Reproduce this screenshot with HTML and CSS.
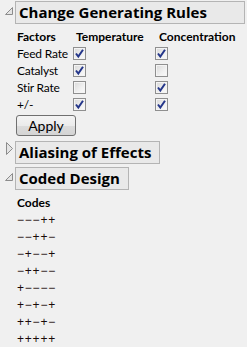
FILE: index.html
```html
<!DOCTYPE html>
<html>
<head>
<meta charset="utf-8">
<link rel="stylesheet" href="styles.css">
</head>
<body>
<div class="page">
  <section class="outline">
    <div class="head">
      <svg class="tri tri-open" width="9" height="9" viewBox="0 0 9 9"><polygon points="7.5,0.5 7.5,7.5 0.5,7.5" fill="#e4e4e4" stroke="#8c8c8c" stroke-width="1"/></svg>
      <div class="title title-wide">Change Generating Rules</div>
    </div>
    <div class="body">
      <div class="rules">
        <div class="cell hdr">Factors</div><div class="cell hdr col2">Temperature</div><div class="cell hdr col3">Concentration</div>
        <div class="cell name">Feed Rate</div><div class="cell"><span class="cb on"><svg width="11" height="11" viewBox="0 0 11 11"><path d="M2 5.5 L4.3 8.5 L9 1.8" fill="none" stroke="#24368a" stroke-width="2"/></svg></span></div><div class="cell"><span class="cb on"><svg width="11" height="11" viewBox="0 0 11 11"><path d="M2 5.5 L4.3 8.5 L9 1.8" fill="none" stroke="#24368a" stroke-width="2"/></svg></span></div>
        <div class="cell name">Catalyst</div><div class="cell"><span class="cb on"><svg width="11" height="11" viewBox="0 0 11 11"><path d="M2 5.5 L4.3 8.5 L9 1.8" fill="none" stroke="#24368a" stroke-width="2"/></svg></span></div><div class="cell"><span class="cb"></span></div>
        <div class="cell name">Stir Rate</div><div class="cell"><span class="cb"></span></div><div class="cell"><span class="cb on"><svg width="11" height="11" viewBox="0 0 11 11"><path d="M2 5.5 L4.3 8.5 L9 1.8" fill="none" stroke="#24368a" stroke-width="2"/></svg></span></div>
        <div class="cell name">+/-</div><div class="cell"><span class="cb on"><svg width="11" height="11" viewBox="0 0 11 11"><path d="M2 5.5 L4.3 8.5 L9 1.8" fill="none" stroke="#24368a" stroke-width="2"/></svg></span></div><div class="cell"><span class="cb on"><svg width="11" height="11" viewBox="0 0 11 11"><path d="M2 5.5 L4.3 8.5 L9 1.8" fill="none" stroke="#24368a" stroke-width="2"/></svg></span></div>
      </div>
      <button class="btn">Apply</button>
    </div>
  </section>
  <section class="outline closed">
    <div class="head">
      <svg class="tri tri-closed" width="9" height="14" viewBox="0 0 9 14"><polygon points="0.5,0.5 6.5,6.5 0.5,12.5" fill="#e4e4e4" stroke="#8c8c8c" stroke-width="1"/></svg>
      <div class="title">Aliasing of Effects</div>
    </div>
  </section>
  <section class="outline">
    <div class="head">
      <svg class="tri tri-open" width="9" height="9" viewBox="0 0 9 9"><polygon points="7.5,0.5 7.5,7.5 0.5,7.5" fill="#e4e4e4" stroke="#8c8c8c" stroke-width="1"/></svg>
      <div class="title">Coded Design</div>
    </div>
    <div class="body">
      <div class="codes">
        <div class="hdr crow">Codes</div>
        <div class="crow code">−−−++</div>
        <div class="crow code">−−++−</div>
        <div class="crow code">−+−−+</div>
        <div class="crow code">−++−−</div>
        <div class="crow code">+−−−−</div>
        <div class="crow code">+−+−+</div>
        <div class="crow code">++−+−</div>
        <div class="crow code">+++++</div>
      </div>
    </div>
  </section>
</div>
</body>
</html>
```
FILE: styles.css
```css
html, body {
  margin: 0;
  padding: 0;
  background: #f0f0f0;
}
.page {
  padding-top: 1px;
  font-family: "Lato", "Liberation Sans", sans-serif;
  color: #000;
  font-size: 12px;
}
.outline {
  display: flex;
  flex-direction: column;
}
.head {
  display: flex;
  align-items: flex-start;
}
.tri {
  display: block;
  flex: none;
}
.tri-open {
  margin: 6px 0 0 5px;
}
.tri-closed {
  margin: 1px 0 0 6px;
}
.title {
  margin-left: 1px;
  box-sizing: border-box;
  height: 23px;
  line-height: 21px;
  border: 1px solid #b4b4b4;
  background: #e9e9e9;
  padding: 0 8px 0 3px;
  font-family: "Open Sans", "Lato", sans-serif;
  font-weight: bold;
  font-size: 15px;
  white-space: nowrap;
}
.tri-closed + .title {
  margin-left: 0;
}
.title-wide {
  width: 230px;
}
.outline + .outline {
  margin-top: 3px;
}
.outline.closed {
  margin-top: 5px;
}
.body {
  padding-left: 17px;
}
.rules {
  margin-top: 4px;
  display: grid;
  grid-template-columns: 56px 82px auto;
  grid-auto-rows: 17px;
}
.cell {
  display: flex;
  align-items: center;
  white-space: nowrap;
}
.name {
  letter-spacing: -0.2px;
}
.hdr {
  font-weight: bold;
}
.col2 { padding-left: 3px; }
.col3 { padding-left: 4px; }
.cb {
  box-sizing: border-box;
  width: 13px;
  height: 13px;
  border: 1px solid #8f8f8f;
  background: linear-gradient(135deg, #d8d8d8 0%, #f0f0f0 60%, #fbfbfb 100%);
  display: flex;
  align-items: center;
  justify-content: center;
  box-shadow: inset 0 0 0 1px #f4f4f4;
}
.cb svg { display: block; }
.btn {
  display: block;
  margin-top: 2px;
  margin-left: -1px;
  width: 60px;
  height: 21px;
  padding: 0;
  border: 1px solid #707070;
  border-radius: 3px;
  background: linear-gradient(#f4f4f4 0%, #ebebeb 50%, #dcdcdc 51%, #d4d4d4 100%);
  font-family: "Lato", "Liberation Sans", sans-serif;
  font-size: 14px;
  color: #000;
}
.codes {
  margin-top: 4px;
  display: flex;
  flex-direction: column;
}
.crow {
  height: 17px;
  display: flex;
  align-items: center;
}
.code {
  font-family: "Liberation Sans", sans-serif;
  font-size: 12px;
  letter-spacing: 0.8px;
  color: #1a0a0a;
}
```
